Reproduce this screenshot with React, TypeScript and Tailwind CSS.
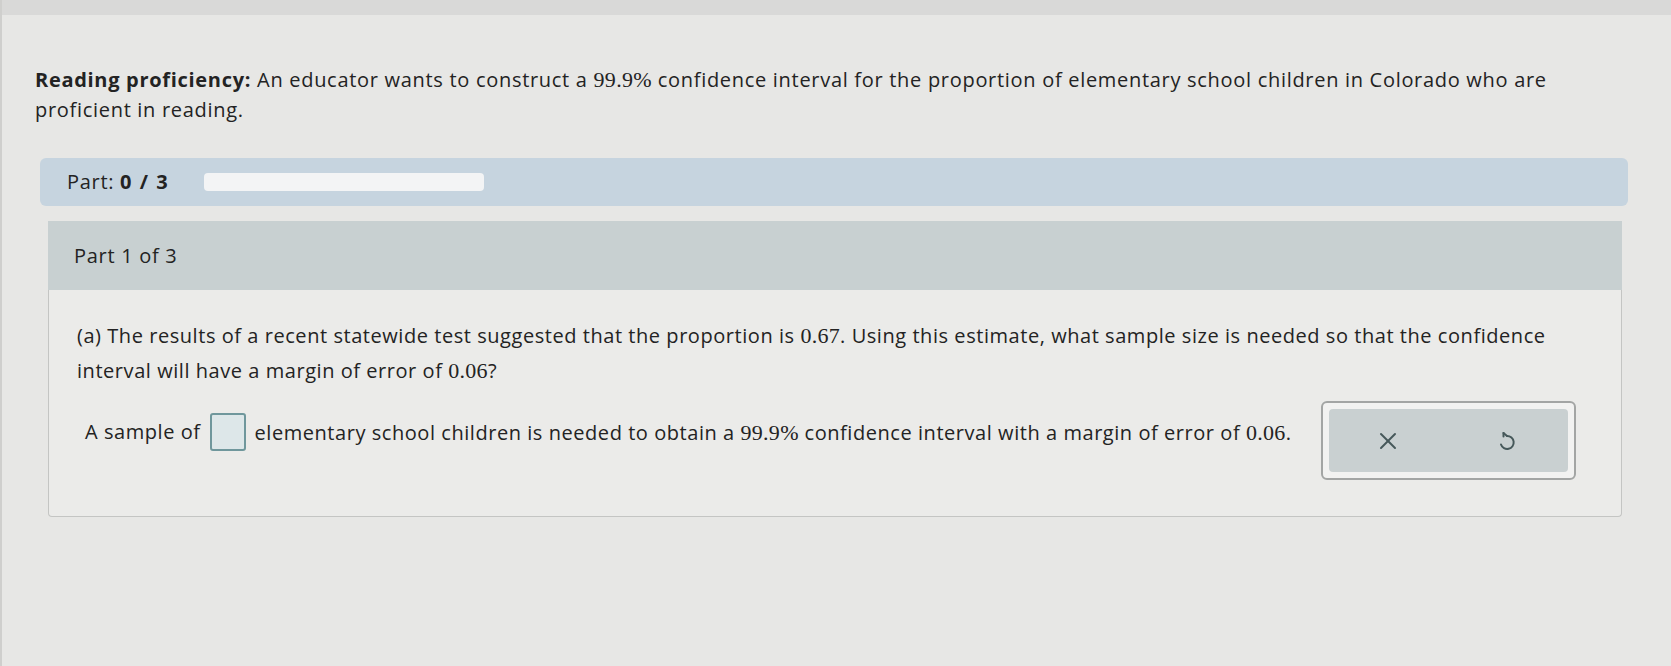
import React from 'react'

const M = ({ children }: { children: React.ReactNode }) => (
  <span className="font-['Liberation_Serif',serif] text-[22px] tracking-[0.3px]">{children}</span>
)

function UndoIcon() {
  return (
    <svg width="22" height="24" viewBox="0 0 22 24" fill="none" stroke="#46585a" strokeWidth="2" strokeLinecap="round" strokeLinejoin="round">
      <path d="M11 7 A6.5 6.5 0 1 1 5 15.5" />
      <path d="M11 7 L7.5 4" />
      <path d="M7.5 4 L7.5 7.5" />
    </svg>
  )
}

function CloseIcon() {
  return (
    <svg width="18" height="18" viewBox="0 0 18 18" fill="none" stroke="#46585a" strokeWidth="2" strokeLinecap="round">
      <path d="M2 2 L16 16" />
      <path d="M16 2 L2 16" />
    </svg>
  )
}

export default function App() {
  return (
    <div className="w-[1671px] h-[666px] bg-[#e7e7e5] font-['Open_Sans',sans-serif] tracking-[0.7px] text-[#232323] border-l-2 border-[#cfcfcd] overflow-hidden">
      {/* top strip */}
      <div className="h-[15px] bg-[#d9d9d8]" />

      <div className="pl-[33px] pt-[50px]">
        <p className="text-[20px] leading-[30px] w-[1540px]">
          <span className="font-bold">Reading proficiency:</span> An educator wants to construct a <M>99.9%</M>{' '}
          confidence interval for the proportion of elementary school children in Colorado who are proficient in reading.
        </p>

        {/* progress bar */}
        <div className="mt-[33px] ml-[5px] w-[1588px] h-[48px] rounded-md bg-[#c6d4df] flex items-center pl-[27px] gap-[35px]">
          <span className="text-[20px]">
            Part: <span className="font-bold tracking-[1.5px]">0 / 3</span>
          </span>
          <div className="w-[280px] h-[18px] rounded-sm bg-[#f3f4f5]" />
        </div>

        {/* part card */}
        <div className="mt-[15px] ml-[13px] w-[1574px]">
          <div className="h-[69px] bg-[#c8d0d1] flex items-center pl-[26px] text-[20px]">Part 1 of 3</div>
          <div className="h-[227px] border border-t-0 border-[#c4c5c3] rounded-b-sm bg-[#ebebe9] pt-[28px] pl-[28px] pr-[45px] tracking-[0.55px]">
            <p className="text-[20px] leading-[35px]">
              (a) The results of a recent statewide test suggested that the proportion is <M>0.67</M>. Using this
              estimate, what sample size is needed so that the confidence interval will have a margin of error of{' '}
              <M>0.06</M>?
            </p>
            <div className="mt-[13px] flex items-start">
              <div className="mt-[12px] pl-[8px] flex items-center text-[20px]">
                <span>A sample of</span>
                <span className="mx-[9px] w-[36px] h-[38px] border-2 border-[#6f979c] rounded-[3px] bg-[#dde7e9]" />
                <span>
                  elementary school children is needed to obtain a <M>99.9%</M> confidence interval with a margin of
                  error of <M>0.06</M>.
                </span>
              </div>
              <div className="ml-auto w-[255px] h-[79px] border-2 border-[#a3a5a4] rounded-md bg-[#f2f2f1] p-[6px]">
                <div className="h-full rounded-sm bg-[#c9d0d1] flex items-center justify-around">
                  <CloseIcon />
                  <UndoIcon />
                </div>
              </div>
            </div>
          </div>
        </div>
      </div>
    </div>
  )
}
